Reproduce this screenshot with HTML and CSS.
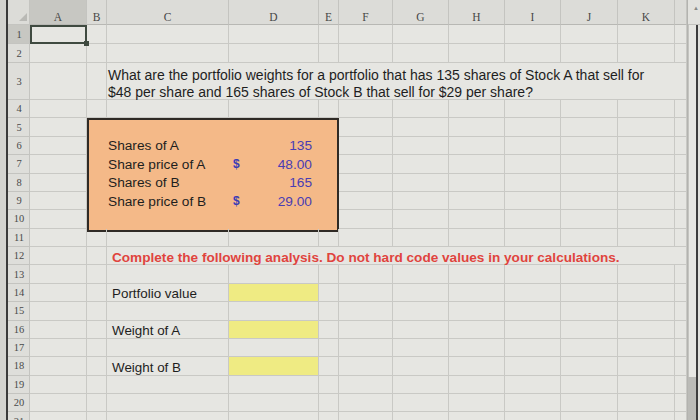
FILE: index.html
```html
<!DOCTYPE html>
<html>
<head>
<meta charset="utf-8">
<link rel="stylesheet" href="styles.css">
</head>
<body>
<div class="bezel"></div>
<div class="sheet">
  <!-- header row -->
  <div class="c corner"><svg class="tri" width="8" height="8" viewBox="0 0 8 8"><polygon points="8,0 8,8 0,8" fill="#b9b9b5"/></svg></div>
  <div class="c h hs">A</div><div class="c h">B</div><div class="c h">C</div><div class="c h">D</div><div class="c h">E</div><div class="c h">F</div><div class="c h">G</div><div class="c h">H</div><div class="c h">I</div><div class="c h">J</div><div class="c h">K</div><div class="c h"></div>
  <!-- row 1 -->
  <div class="c r hs">1</div><div class="c sel"></div><div class="c"></div><div class="c"></div><div class="c"></div><div class="c"></div><div class="c"></div><div class="c"></div><div class="c"></div><div class="c"></div><div class="c"></div><div class="c"></div><div class="c"></div>
  <!-- row 2 -->
  <div class="c r">2</div><div class="c"></div><div class="c"></div><div class="c"></div><div class="c"></div><div class="c"></div><div class="c"></div><div class="c"></div><div class="c"></div><div class="c"></div><div class="c"></div><div class="c"></div><div class="c"></div>
  <!-- row 3 -->
  <div class="c r">3</div><div class="c"></div><div class="c"></div>
  <div class="c q"><span>What are the portfolio weights for a portfolio that has 135 shares of Stock A that sell for</span><span>$48 per share and 165 shares of Stock B that sell for $29 per share?</span></div>
  <div class="c"></div>
  <!-- row 4 -->
  <div class="c r">4</div><div class="c"></div><div class="c"></div><div class="c"></div><div class="c"></div><div class="c"></div><div class="c"></div><div class="c"></div><div class="c"></div><div class="c"></div><div class="c"></div><div class="c"></div><div class="c"></div>
  <!-- data box B5:E10 -->
  <div class="box">
    <div class="bl">Shares of A</div><div class="bv"><span></span><span>135</span></div>
    <div class="bl">Share price of A</div><div class="bv"><span class="dol">$</span><span>48.00</span></div>
    <div class="bl">Shares of B</div><div class="bv"><span></span><span>165</span></div>
    <div class="bl">Share price of B</div><div class="bv"><span class="dol">$</span><span>29.00</span></div>
  </div>
  <!-- rows 5-10 -->
  <div class="c r">5</div><div class="c"></div><div class="c"></div><div class="c"></div><div class="c"></div><div class="c"></div><div class="c"></div><div class="c"></div><div class="c"></div>
  <div class="c r">6</div><div class="c"></div><div class="c"></div><div class="c"></div><div class="c"></div><div class="c"></div><div class="c"></div><div class="c"></div><div class="c"></div>
  <div class="c r">7</div><div class="c"></div><div class="c"></div><div class="c"></div><div class="c"></div><div class="c"></div><div class="c"></div><div class="c"></div><div class="c"></div>
  <div class="c r">8</div><div class="c"></div><div class="c"></div><div class="c"></div><div class="c"></div><div class="c"></div><div class="c"></div><div class="c"></div><div class="c"></div>
  <div class="c r">9</div><div class="c"></div><div class="c"></div><div class="c"></div><div class="c"></div><div class="c"></div><div class="c"></div><div class="c"></div><div class="c"></div>
  <div class="c r">10</div><div class="c"></div><div class="c"></div><div class="c"></div><div class="c"></div><div class="c"></div><div class="c"></div><div class="c"></div><div class="c"></div>
  <!-- row 11 -->
  <div class="c r">11</div><div class="c"></div><div class="c"></div><div class="c"></div><div class="c"></div><div class="c"></div><div class="c"></div><div class="c"></div><div class="c"></div><div class="c"></div><div class="c"></div><div class="c"></div><div class="c"></div>
  <!-- row 12 -->
  <div class="c r">12</div><div class="c"></div><div class="c"></div>
  <div class="c note">Complete the following analysis. Do not hard code values in your calculations.</div>
  <div class="c"></div>
  <!-- row 13 -->
  <div class="c r">13</div><div class="c"></div><div class="c"></div><div class="c"></div><div class="c"></div><div class="c"></div><div class="c"></div><div class="c"></div><div class="c"></div><div class="c"></div><div class="c"></div><div class="c"></div><div class="c"></div>
  <!-- row 14 -->
  <div class="c r">14</div><div class="c"></div><div class="c"></div><div class="c lab">Portfolio value</div><div class="c yel"></div><div class="c"></div><div class="c"></div><div class="c"></div><div class="c"></div><div class="c"></div><div class="c"></div><div class="c"></div><div class="c"></div>
  <!-- row 15 -->
  <div class="c r">15</div><div class="c"></div><div class="c"></div><div class="c"></div><div class="c"></div><div class="c"></div><div class="c"></div><div class="c"></div><div class="c"></div><div class="c"></div><div class="c"></div><div class="c"></div><div class="c"></div>
  <!-- row 16 -->
  <div class="c r">16</div><div class="c"></div><div class="c"></div><div class="c lab">Weight of A</div><div class="c yel"></div><div class="c"></div><div class="c"></div><div class="c"></div><div class="c"></div><div class="c"></div><div class="c"></div><div class="c"></div><div class="c"></div>
  <!-- row 17 -->
  <div class="c r">17</div><div class="c"></div><div class="c"></div><div class="c"></div><div class="c"></div><div class="c"></div><div class="c"></div><div class="c"></div><div class="c"></div><div class="c"></div><div class="c"></div><div class="c"></div><div class="c"></div>
  <!-- row 18 -->
  <div class="c r">18</div><div class="c"></div><div class="c"></div><div class="c lab">Weight of B</div><div class="c yel"></div><div class="c"></div><div class="c"></div><div class="c"></div><div class="c"></div><div class="c"></div><div class="c"></div><div class="c"></div><div class="c"></div>
  <!-- rows 19-21 -->
  <div class="c r">19</div><div class="c"></div><div class="c"></div><div class="c"></div><div class="c"></div><div class="c"></div><div class="c"></div><div class="c"></div><div class="c"></div><div class="c"></div><div class="c"></div><div class="c"></div><div class="c"></div>
  <div class="c r">20</div><div class="c"></div><div class="c"></div><div class="c"></div><div class="c"></div><div class="c"></div><div class="c"></div><div class="c"></div><div class="c"></div><div class="c"></div><div class="c"></div><div class="c"></div><div class="c"></div>
  <div class="c r r21">21</div><div class="c"></div><div class="c"></div><div class="c"></div><div class="c"></div><div class="c"></div><div class="c"></div><div class="c"></div><div class="c"></div><div class="c"></div><div class="c"></div><div class="c"></div><div class="c"></div>
</div>
<div class="scroll">
  <div class="sb-top"><span class="arrow">▲</span></div>
  <div class="thumb"></div>
  <div class="track"></div>
</div>
</body>
</html>
```
FILE: styles.css
```css
html, body {
  margin: 0;
  padding: 0;
}
body {
  width: 700px;
  height: 420px;
  overflow: hidden;
  display: flex;
  background: #dadad6;
  font-family: "Liberation Sans", Arial, sans-serif;
  color: #222;
}
.bezel {
  width: 6px;
  flex: none;
  background: #d3d3cf;
  border-right: 2px solid #3a3a3a;
}
.sheet {
  flex: none;
  display: grid;
  grid-template-columns: 22px 57px 20px 122px 90px 20px 54px 56px 56px 56px 57px 57px 12px;
  grid-template-rows: 25px 19px 19px 37px repeat(18, 18.375px);
  background: #e6e6e2;
}
.c {
  box-sizing: border-box;
  border-right: 1px solid #c9c9c5;
  border-bottom: 1px solid #c9c9c5;
  min-width: 0;
}
.corner {
  background: #dcdcd8;
  display: flex;
  align-items: flex-end;
  justify-content: flex-end;
  padding: 0 2px 3px 0;
  border-color: #c4c4c0;
}
.h {
  background: #dcdcd8;
  border-color: #c4c4c0;
  border-bottom-color: #b8b8b4;
  font-family: "Liberation Serif", "Times New Roman", serif;
  font-size: 11.5px;
  color: #474747;
  display: flex;
  align-items: center;
  justify-content: center;
  padding-top: 9px;
}
.r {
  background: #dededa;
  border-color: #c4c4c0;
  font-family: "Liberation Serif", "Times New Roman", serif;
  font-size: 10.5px;
  color: #4a4a4a;
  display: flex;
  align-items: center;
  justify-content: center;
  padding-left: 1px;
}
.r21 {
  align-items: flex-start;
  padding-top: 4px;
}
.hs {
  background: #c7c7c2;
}
.sel {
  border: 2px solid #3f4a40;
  position: relative;
}
.sel::after {
  content: "";
  position: absolute;
  right: -4px;
  bottom: -4px;
  width: 5px;
  height: 5px;
  background: #3f4a40;
}
.q {
  grid-column: span 9;
  border-right: none;
  display: flex;
  flex-direction: column;
  justify-content: center;
  padding: 5px 0 0 1px;
  font-size: 14px;
  line-height: 17px;
  white-space: nowrap;
  color: #1e1e1e;
}
.box {
  grid-column: 3 / 7;
  grid-row: 6 / 12;
  background: #f4b988;
  border: 2px solid #2f2a25;
  box-sizing: border-box;
  padding-top: 16.4px;
  display: grid;
  grid-template-columns: 19px 121px 1fr;
  grid-template-rows: repeat(4, 18.375px);
  align-content: start;
  font-size: 13.7px;
  color: #1e1e1e;
  margin-bottom: -3px;
}
.bl {
  grid-column: 2;
  display: flex;
  align-items: center;
  white-space: nowrap;
}
.bv {
  grid-column: 3;
  display: flex;
  align-items: center;
  justify-content: space-between;
  padding: 0 25px 0 4px;
  color: #4a3db3;
}
.dol {
  color: #3b3cb5;
  font-weight: bold;
  font-size: 12px;
}
.note {
  grid-column: span 9;
  border-right: none;
  display: flex;
  align-items: center;
  padding: 4px 0 0 5px;
  font-weight: bold;
  font-size: 13.6px;
  color: #e0443e;
  white-space: nowrap;
}
.lab {
  display: flex;
  align-items: center;
  padding: 3px 0 0 5px;
  font-size: 13.4px;
  white-space: nowrap;
  color: #1e1e1e;
}
.yel {
  background: #efeb83;
}
.scroll {
  flex: 1;
  display: flex;
  flex-direction: column;
  border-left: 1px solid #b3b3af;
  background: #e2e2de;
}
.sb-top {
  height: 25px;
  flex: none;
  display: flex;
  justify-content: flex-end;
  align-items: flex-start;
  padding-top: 5px;
  box-sizing: border-box;
  border-bottom: 1px solid #c2c2be;
}
.arrow {
  font-size: 6px;
  color: #8a8a86;
  padding-right: 1px;
}
.thumb {
  height: 352px;
  flex: none;
  background: #e7e7e3;
  border-right: 2px solid #3d3d3d;
  border-left: 1px solid #c4c4c0;
  margin-right: 2px;
}
.track {
  flex: 1;
  background: #bbbbb7;
  border-right: 2px solid #3d3d3d;
  margin-right: 2px;
}
```
